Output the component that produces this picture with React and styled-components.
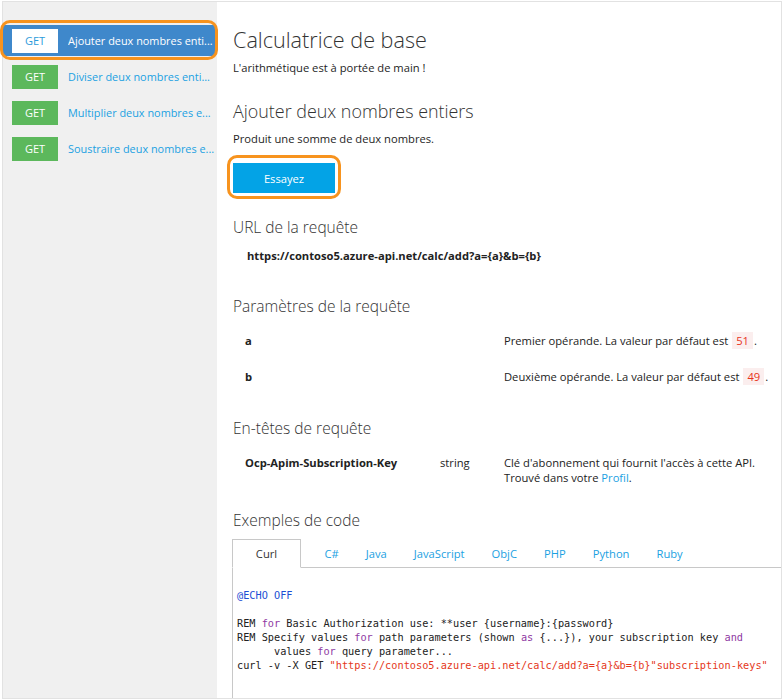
import React from 'react';
import styled, { createGlobalStyle, css } from 'styled-components';

const GlobalStyle = createGlobalStyle`
  html, body { margin: 0; padding: 0; background: #fff; }
  body { font-family: "Open Sans", "Noto Sans", sans-serif; color: #1e1e1e; }
  * { box-sizing: border-box; }
`;

const ring = (t, r, b, l) => css`
  &::after {
    content: '';
    position: absolute;
    top: ${t}px; right: ${r}px; bottom: ${b}px; left: ${l}px;
    border: 3px solid #f7931e;
    border-radius: 10px;
    pointer-events: none;
  }
`;

const Frame = styled.div`
  margin: 1px 0 0 2px;
  width: 780px;
  height: 698px;
  border: 1px solid #e2e2e2;
  display: grid;
  grid-template-columns: 214px 1fr;
`;

const Sidebar = styled.nav`
  background: #f0f0f0;
  padding: 23px 2px 0 0;
  display: flex;
  flex-direction: column;
  gap: 5px;
`;

const NavItem = styled.div`
  position: relative;
  height: 31px;
  display: flex;
  align-items: center;
  gap: 10px;
  padding-left: 9px;
  background: ${p => (p.$active ? '#3f88cb' : 'transparent')};
  ${p => p.$active && ring(-5, -3, -4, -3)}
`;

const Badge = styled.span`
  width: 46px;
  height: 24px;
  display: flex;
  align-items: center;
  justify-content: center;
  font-size: 11px;
  background: ${p => (p.$active ? '#ffffff' : '#5cb85c')};
  color: ${p => (p.$active ? '#2d9cdb' : '#ffffff')};
`;

const NavLabel = styled.span`
  font-size: 10.9px;
  white-space: nowrap;
  overflow: hidden;
  color: ${p => (p.$active ? '#ffffff' : '#1ba1e2')};
`;

const Main = styled.main`
  padding: 22px 0 0 16px;
  display: flex;
  flex-direction: column;
  align-items: flex-start;
  overflow: hidden;
  min-width: 0;
`;

const Title = styled.h1`
  margin: 0;
  font-size: 21.6px;
  font-weight: 300;
  line-height: 32px;
  color: #333;
`;

const SubTitle = styled.h2`
  margin: 21px 0 0;
  font-size: 17.9px;
  font-weight: 300;
  line-height: 28px;
  color: #333;
`;

const Section = styled.h3`
  margin: ${p => p.$top}px 0 0;
  font-size: 15.5px;
  font-weight: 300;
  line-height: 24px;
  color: #333;
`;

const Text = styled.p`
  margin: ${p => p.$top}px 0 0;
  font-size: 11.2px;
  line-height: 16px;
`;

const ButtonWrap = styled.div`
  position: relative;
  margin-top: 16px;
  ${ring(-8, -6, -6, -6)}
`;

const TryButton = styled.button`
  display: block;
  width: 102px;
  height: 30px;
  border: none;
  background: #03a3e6;
  color: #fff;
  font-family: inherit;
  font-size: 11.2px;
  cursor: pointer;
`;

const Url = styled.div`
  margin-top: 9px;
  padding-left: 14px;
  font-size: 11.2px;
  font-weight: 700;
  line-height: 16px;
  color: #222;
`;

const Table = styled.div`
  margin-top: 5px;
  align-self: stretch;
`;

const Row = styled.div`
  display: grid;
  grid-template-columns: 195px 64px 1fr;
  padding: 10px 0 10px 12px;
  font-size: 11.2px;
  line-height: ${p => p.$lh || 16}px;
`;

const Name = styled.span`
  font-weight: 700;
  color: #222;
`;

const Cell = styled.span`
  color: #222;
  white-space: nowrap;
`;

const InlineCode = styled.span`
  color: #e8331b;
  background: #fbeeee;
  padding: 1px 4px;
  margin: 0 1px;
`;

const Link = styled.a`
  color: #1ba1e2;
  text-decoration: none;
`;

const TabBar = styled.div`
  margin: 7px 0 0 -1px;
  align-self: stretch;
  display: flex;
  border-bottom: 1px solid #c8c8c8;
`;

const Tab = styled.div`
  height: 29px;
  display: flex;
  align-items: center;
  justify-content: center;
  font-size: 11.2px;
  ${p =>
    p.$active
      ? css`
          width: 69px;
          margin: 0 10px -1px 0;
          border: 1px solid #c8c8c8;
          border-bottom-color: #fff;
          background: #fff;
          color: #333;
        `
      : css`
          height: 28px;
          padding: 0 13.5px;
          color: #1ba1e2;
        `}
`;

const CodePane = styled.div`
  margin-left: -1px;
  align-self: stretch;
  flex: 1;
  border-left: 1px solid #c8c8c8;
  padding: 20px 0 0 4px;
`;

const Pre = styled.pre`
  margin: 0;
  font-family: "DejaVu Sans Mono", "Liberation Mono", monospace;
  font-size: 10.25px;
  line-height: 14px;
  color: #222;
  white-space: pre;
`;

const Tok = styled.span`
  color: ${p => ({ kw: '#1c4fd4', op: '#8f3aa3', str: '#e5381b' }[p.$t])};
`;

const endpoints = [
  'Ajouter deux nombres enti...',
  'Diviser deux nombres enti...',
  'Multiplier deux nombres e...',
  'Soustraire deux nombres e...',
];

const tabs = ['Curl', 'C#', 'Java', 'JavaScript', 'ObjC', 'PHP', 'Python', 'Ruby'];

export default function App() {
  return (
    <>
      <GlobalStyle />
      <Frame>
        <Sidebar>
          {endpoints.map((e, i) => (
            <NavItem key={e} $active={i === 0}>
              <Badge $active={i === 0}>GET</Badge>
              <NavLabel $active={i === 0}>{e}</NavLabel>
            </NavItem>
          ))}
        </Sidebar>
        <Main>
          <Title>Calculatrice de base</Title>
          <Text $top={4}>L'arithmétique est à portée de main !</Text>
          <SubTitle>Ajouter deux nombres entiers</SubTitle>
          <Text $top={6}>Produit une somme de deux nombres.</Text>
          <ButtonWrap>
            <TryButton>Essayez</TryButton>
          </ButtonWrap>

          <Section $top={22}>URL de la requête</Section>
          <Url>https://contoso5.azure-api.net/calc/add?a={'{a}'}&amp;b={'{b}'}</Url>

          <Section $top={30}>Paramètres de la requête</Section>
          <Table>
            <Row>
              <Name>a</Name>
              <Cell />
              <Cell>
                Premier opérande. La valeur par défaut est <InlineCode>51</InlineCode>.
              </Cell>
            </Row>
            <Row>
              <Name>b</Name>
              <Cell />
              <Cell>
                Deuxième opérande. La valeur par défaut est <InlineCode>49</InlineCode>.
              </Cell>
            </Row>
          </Table>

          <Section $top={21}>En-têtes de requête</Section>
          <Table>
            <Row $lh={15}>
              <Name>Ocp-Apim-Subscription-Key</Name>
              <Cell>string</Cell>
              <Cell>
                Clé d'abonnement qui fournit l'accès à cette API.
                <br />
                Trouvé dans votre <Link href="#">Profil</Link>.
              </Cell>
            </Row>
          </Table>

          <Section $top={13}>Exemples de code</Section>
          <TabBar>
            {tabs.map((t, i) => (
              <Tab key={t} $active={i === 0}>{t}</Tab>
            ))}
          </TabBar>
          <CodePane>
            <Pre>
              <Tok $t="kw">@ECHO OFF</Tok>
              {'\n\n'}
              {'REM '}<Tok $t="op">for</Tok>{' Basic Authorization use: **user {username}:{password}\n'}
              {'REM Specify values '}<Tok $t="op">for</Tok>{' path parameters (shown '}<Tok $t="op">as</Tok>{' {...}), your subscription key '}<Tok $t="op">and</Tok>{'\n'}
              {'      values '}<Tok $t="op">for</Tok>{' query parameter...\n'}
              {'curl -v -X GET '}<Tok $t="str">"https://contoso5.azure-api.net/calc/add?a={'{a}'}&amp;b={'{b}'}"subscription-keys"</Tok>
            </Pre>
          </CodePane>
        </Main>
      </Frame>
    </>
  );
}
